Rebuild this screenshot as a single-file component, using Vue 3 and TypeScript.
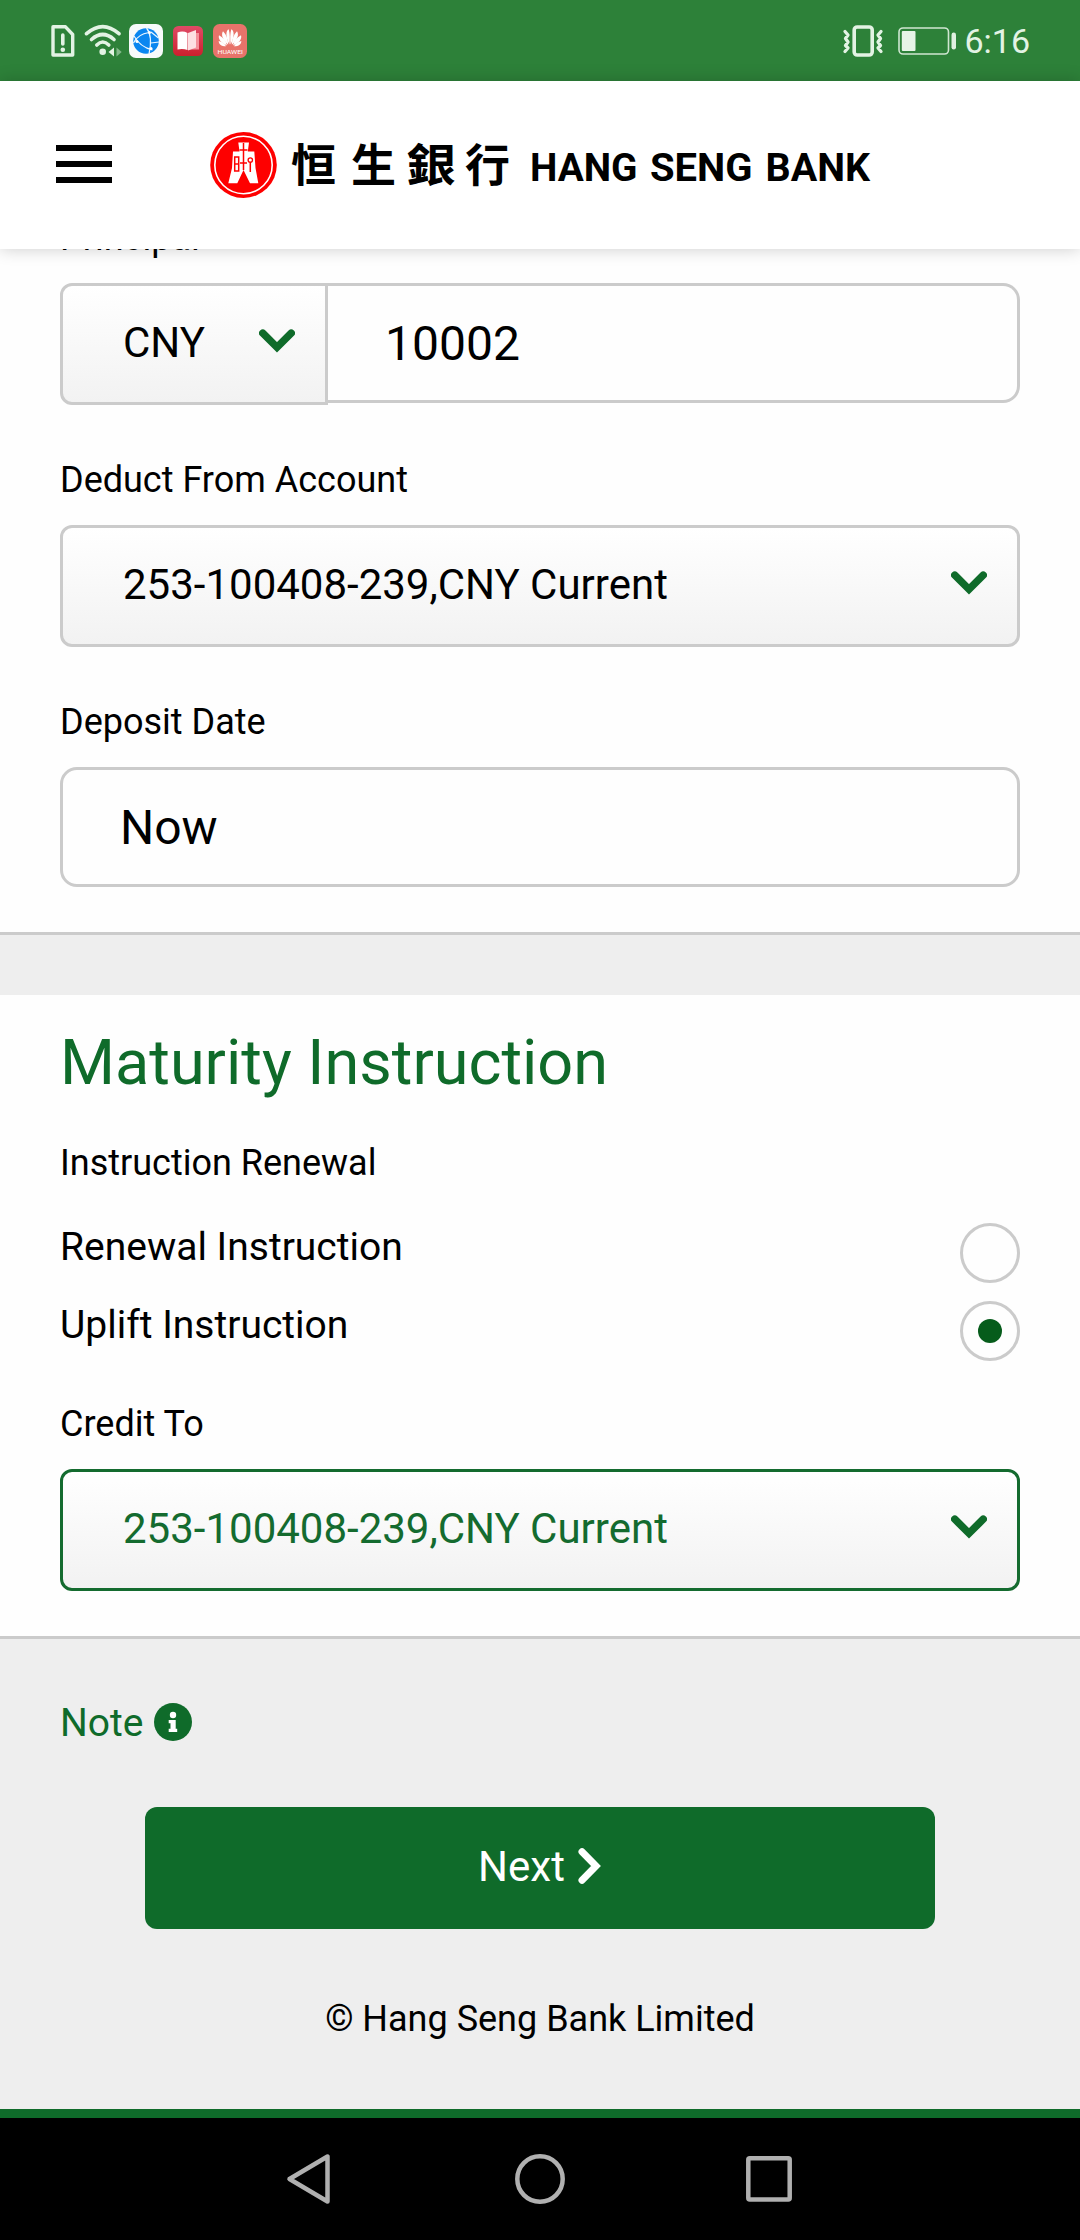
<script setup lang="ts">
import { ref } from 'vue'

interface RenewalOption {
  id: string
  label: string
}

const account = '253-100408-239,CNY Current'
const currency = ref('CNY')
const principal = ref('10002')
const depositDate = ref('Now')
const options: RenewalOption[] = [
  { id: 'renewal', label: 'Renewal Instruction' },
  { id: 'uplift', label: 'Uplift Instruction' },
]
const selected = ref('uplift')
</script>

<template>
  <div class="screen">
    <div class="status">
      <svg class="sim" width="26" height="34" viewBox="0 0 26 34" fill="none" stroke="#e3f3e4" stroke-width="3.4" stroke-linejoin="round" stroke-linecap="round">
        <path d="M3 2.800H15.500L22.700 10.500V31H3Z" />
        <path d="M12.800 11v9" stroke-width="3.6" />
        <circle cx="12.800" cy="25.800" r="2.300" fill="#e3f3e4" stroke="none" />
      </svg>
      <svg class="wifi" width="38" height="34" viewBox="0 0 38 34" fill="none" stroke="#e3f3e4" stroke-width="3.600" stroke-linecap="round">
        <path d="M2.500 9.700Q18.700-4.500 35 9.700" />
        <path d="M7.500 15.500Q18.700 5.500 30 15.500" />
        <path d="M12.800 21Q18.700 15 24.800 21" />
        <circle cx="18.700" cy="27.800" r="3.300" fill="#e3f3e4" stroke="none" />
        <path d="M30 23.500v9l-5.500-4.500z" fill="#e3f3e4" stroke="none" />
        <path d="M32.500 23.500v9l5.200-4.500z" fill="#83b98a" stroke="none" />
      </svg>
      <svg class="tile" width="34" height="34" viewBox="0 0 34 34">
        <rect width="34" height="34" rx="7" fill="#f7fafa" />
        <circle cx="17" cy="17" r="12.800" fill="#0a86f0" />
        <g fill="none" stroke="#eaf6ff" stroke-width="1.200">
          <path d="M17.500 4Q24 12 20 30M4.500 19Q9 10 20 8.500M5 12Q11 23 23.500 26M22 8L29.500 14M22 19L30 18" />
        </g>
        <g fill="#fff"><circle cx="20.500" cy="8.500" r="1.500" /><circle cx="8" cy="17.500" r="1.500" /><circle cx="22" cy="24.500" r="1.500" /></g>
      </svg>
      <svg class="book" width="30" height="30" viewBox="0 0 30 30">
        <defs><linearGradient id="bookRed" x1="0" y1="0" x2="0" y2="1"><stop offset="0" stop-color="#e04a66" /><stop offset="1" stop-color="#cb202d" /></linearGradient></defs>
        <rect width="30" height="30" rx="5.500" fill="url(#bookRed)" />
        <path d="M16 7h10v16.500H16z" fill="#f4919a" />
        <path d="M4.500 6.500Q10 4.500 14.500 7V24Q10 22.500 4.500 23.500Z" fill="#fff" />
        <path d="M15 7L23 4V21.500L15 24.500Z" fill="#fde0e2" />
      </svg>
      <svg class="tile" width="34" height="34" viewBox="0 0 34 34">
        <rect width="34" height="34" rx="6.500" fill="#e8736a" />
        <g fill="#fff">
          <path d="M16.400 20.500C12.500 13 12.500 7 15.700 5.300C17 10 17 15 16.400 20.500Z" />
          <path d="M15.200 20.800C9 15 8 10.500 10 7.300C13.500 11 15 15 15.200 20.800Z" />
          <path d="M14 21.400C7 18.500 5 14.500 6 11.300C10.500 13.500 13 17 14 21.400Z" />
          <path d="M13 22.300C8 22.300 5.500 20 5.700 17C9 17.500 11.500 19.500 13 22.300Z" />
          <path d="M17.600 20.500C21.500 13 21.500 7 18.300 5.300C17 10 17 15 17.600 20.500Z" />
          <path d="M18.800 20.800C25 15 26 10.500 24 7.300C20.500 11 19 15 18.800 20.800Z" />
          <path d="M20 21.400C27 18.500 29 14.500 28 11.300C23.500 13.500 21 17 20 21.400Z" />
          <path d="M21 22.300C26 22.300 28.500 20 28.300 17C25 17.500 22.500 19.500 21 22.300Z" />
          <text x="4.500" y="29.500" font-size="6" textLength="25.500" lengthAdjust="spacingAndGlyphs">HUAWEI</text>
        </g>
      </svg>
      <svg class="vibrate" width="42" height="34" viewBox="0 0 42 34" fill="none" stroke="#e3f3e4" stroke-width="3.600" stroke-linecap="round" stroke-linejoin="round">
        <rect x="12.200" y="3" width="18" height="28" rx="3" />
        <path d="M3 7.500L6 11L3.500 14.500L6 18L3.500 21.500L6 24L3 27.500M39 7.500L36 11L38.500 14.500L36 18L38.500 21.500L36 24L39 27.500" stroke-width="3.300" />
      </svg>
      <svg class="battery" width="60" height="28" viewBox="0 0 60 28">
        <rect x="1" y="1" width="49.500" height="26" rx="4" fill="none" stroke="#cfe6d1" stroke-width="1.600" />
        <rect x="3.800" y="4" width="13.700" height="20" rx="1" fill="#e6f4e7" />
        <rect x="53.500" y="5.500" width="4.500" height="17" rx="2.200" fill="#dff0e0" />
      </svg>
      <span class="time">6:16</span>
    </div>

    <header class="header">
      <div class="burger"><i></i><i></i><i></i></div>
      <svg class="logo" width="664" height="70" viewBox="0 0 664 70">
        <ellipse cx="33.500" cy="35" rx="33.300" ry="33" fill="#fe0000" />
        <circle cx="33.500" cy="35" r="28.700" fill="none" stroke="#fff" stroke-width="1.600" />
        <path d="M28.300 12.500H39L37.800 21.500H44.300L45.500 38L48.300 53.300H40L33.500 40L27.300 53.300H18.300L22 38L23 21.500H29.500Z" fill="#fff" />
        <path d="M33.500 13V40M29.500 20H37.500M30 33H37M24.700 27h4v14h-4zM24.700 34h4M40.300 32v10" fill="none" stroke="#fe0000" stroke-width="1.500" />
        <circle cx="40.300" cy="30" r="2.200" fill="none" stroke="#fe0000" stroke-width="1.300" />
        <g class="han">
          <text x="81" y="51.500">恒</text>
          <text x="141" y="51.500">生</text>
          <text x="196.500" y="51.500" textLength="49" lengthAdjust="spacingAndGlyphs">銀</text>
          <text x="255" y="51.500">行</text>
        </g>
        <g class="latin">
          <text x="320" y="51" textLength="107.500" lengthAdjust="spacingAndGlyphs">HANG</text>
          <text x="440" y="51" textLength="102.500" lengthAdjust="spacingAndGlyphs">SENG</text>
          <text x="555.500" y="51" textLength="104.500" lengthAdjust="spacingAndGlyphs">BANK</text>
        </g>
      </svg>
    </header>

    <section class="panel first">
      <div class="label">Principal</div>
      <div class="amount">
        <div class="select currency">
          <span>{{ currency }}</span>
          <svg class="chev" width="36" height="24" viewBox="0 0 36 24"><path d="M3.800 4.200L18 18.300L32.200 4.200" /></svg>
        </div>
        <div class="input money">{{ principal }}</div>
      </div>
      <div class="label spaced">Deduct From Account</div>
      <div class="select">
        <span>{{ account }}</span>
        <svg class="chev" width="36" height="24" viewBox="0 0 36 24"><path d="M3.800 4.200L18 18.300L32.200 4.200" /></svg>
      </div>
      <div class="label spaced">Deposit Date</div>
      <div class="input">{{ depositDate }}</div>
    </section>

    <section class="panel second">
      <h2>Maturity Instruction</h2>
      <div class="label renewal">Instruction Renewal</div>
      <div class="options">
        <div v-for="o in options" :key="o.id" class="option" @click="selected = o.id">
          <span>{{ o.label }}</span>
          <span class="radio" :class="{ on: selected === o.id }"></span>
        </div>
      </div>
      <div class="label credit">Credit To</div>
      <div class="select active">
        <span>{{ account }}</span>
        <svg class="chev" width="36" height="24" viewBox="0 0 36 24"><path d="M3.800 4.200L18 18.300L32.200 4.200" /></svg>
      </div>
    </section>

    <footer class="footer">
      <div class="note">
        <span>Note</span>
        <svg width="38" height="38" viewBox="0 0 38 38">
          <circle cx="19" cy="19" r="19" fill="#0f6b2a" />
          <circle cx="19" cy="12" r="3.200" fill="#fff" />
          <path d="M14.700 17H21.700V25.800H23.200V29H14.700V25.800H16.500V20.200H14.700Z" fill="#fff" />
        </svg>
      </div>
      <div class="next">
        <span>Next</span>
        <svg width="25" height="38" viewBox="0 0 25 38"><path d="M5 4.800L19 19L5 33.200" fill="none" stroke="#fff" stroke-width="7" stroke-linecap="round" /></svg>
      </div>
      <div class="copy">© Hang Seng Bank Limited</div>
    </footer>

    <nav class="nav">
      <svg width="50" height="54" viewBox="0 0 50 54"><path d="M42.500 4.500V49.500L4.500 27Z" /></svg>
      <svg width="54" height="54" viewBox="0 0 54 54"><circle cx="27" cy="27" r="22.700" /></svg>
      <svg width="50" height="54" viewBox="0 0 50 54"><rect x="4.300" y="6.200" width="41.400" height="41.400" rx="1.500" /></svg>
    </nav>
  </div>
</template>

<style>
body {
  margin: 0;
}
</style>

<style scoped>
.screen {
  width: 1080px;
  height: 2240px;
  overflow: hidden;
  background: #eee;
  color: #000;
  font-family: Roboto, 'Noto Sans', sans-serif;
  box-sizing: border-box;
}
.screen * {
  box-sizing: border-box;
}
svg {
  display: block;
  flex: none;
}
.status {
  display: flex;
  align-items: center;
  height: 81px;
  padding: 0 50px 0 50px;
  background: #2d8139;
}
.sim { margin-right: 8px; }
.wifi { margin-right: 7px; }
.tile { margin-right: 10px; }
.book { margin-right: 10px; }
.vibrate { margin-left: auto; margin-right: 14px; }
.battery { margin-right: 6px; }
.time {
  font-size: 34px;
  line-height: 41px;
  padding-top: 1px;
  color: #e3f3e4;
}
.header {
  position: relative;
  z-index: 2;
  display: flex;
  align-items: center;
  height: 168px;
  padding: 0 56px;
  background: #fff;
  box-shadow: 0 0 16px rgba(0, 0, 0, 0.2);
}
.burger {
  display: flex;
  flex-direction: column;
  gap: 10px;
  width: 56px;
  margin: 0 98px 2px 0;
}
.burger i {
  height: 6px;
  background: #000;
}
.han {
  font-family: 'Noto Sans CJK TC', 'Noto Sans CJK SC', sans-serif;
  font-size: 45px;
  font-weight: 700;
}
.latin {
  font-size: 39.500px;
  font-weight: 700;
}
.panel {
  background: #fefefe;
  padding: 0 60px 45px;
  border-bottom: 3px solid #cbcbcb;
}
.first {
  margin: -33px 0 60px;
}
.second {
  padding-top: 29px;
}
.label {
  font-size: 36px;
  line-height: 44px;
  margin-bottom: 23px;
}
.spaced { margin-top: 53px; }
.renewal { margin: 41px 0 38px; }
.credit { margin-top: 41px; }
.amount {
  display: flex;
  align-items: flex-start;
}
.select {
  display: flex;
  align-items: center;
  justify-content: space-between;
  height: 122px;
  padding: 0 30px 3px 60px;
  border: 3px solid #cbcbcb;
  border-radius: 12px;
  background: linear-gradient(#fff, #f2f2f2);
  font-size: 42px;
}
.select.active {
  border-color: #146b2f;
  color: #146b2f;
}
.chev {
  margin-bottom: 3px;
}
.chev path {
  fill: none;
  stroke: #0f6b2a;
  stroke-width: 7.500;
  stroke-linecap: round;
}
.currency {
  width: 268px;
  border-radius: 12px 0 0 12px;
}
.input {
  display: flex;
  align-items: center;
  height: 120px;
  padding-left: 57px;
  border: 3px solid #cbcbcb;
  border-radius: 17px;
  background: #fefefe;
  font-size: 48px;
}
.money {
  flex: 1;
  border-left: 0;
  border-radius: 0 17px 17px 0;
}
h2 {
  margin: 0;
  font-size: 63px;
  line-height: 76px;
  padding-top: 1px;
  height: 76px;
  font-weight: 400;
  color: #0f6b2a;
}
.options {
  display: flex;
  flex-direction: column;
  gap: 18px;
}
.option {
  display: flex;
  justify-content: space-between;
  height: 60px;
  font-size: 39px;
  line-height: 48px;
}
.radio {
  display: flex;
  align-items: center;
  justify-content: center;
  width: 60px;
  height: 60px;
  border: 3px solid #cbcbcb;
  border-radius: 50%;
}
.radio.on::after {
  content: '';
  width: 24px;
  height: 24px;
  border-radius: 50%;
  background: #065c1b;
}
.footer {
  height: 479px;
  padding-top: 61px;
  border-bottom: 9px solid #0f6b2a;
}
.note {
  display: flex;
  align-items: center;
  gap: 10px;
  height: 46px;
  padding-left: 60px;
  font-size: 39px;
  color: #0f6b2a;
}
.note svg {
  margin-bottom: 3px;
}
.next {
  display: flex;
  align-items: center;
  justify-content: center;
  gap: 12px;
  height: 122px;
  margin: 61px 145px 69px;
  border-radius: 12px;
  background: #0f6b2a;
  color: #fff;
  font-size: 42px;
}
.next span {
  padding-bottom: 3px;
}
.next svg {
  margin-bottom: 5px;
}
.copy {
  font-size: 36px;
  line-height: 42px;
  text-align: center;
}
.nav {
  display: flex;
  align-items: center;
  justify-content: space-between;
  height: 122px;
  padding: 0 286px 0 285px;
  background: #000;
}
.nav svg {
  fill: none;
  stroke: #b0b0b0;
  stroke-width: 4.500;
  stroke-linejoin: round;
}
</style>
